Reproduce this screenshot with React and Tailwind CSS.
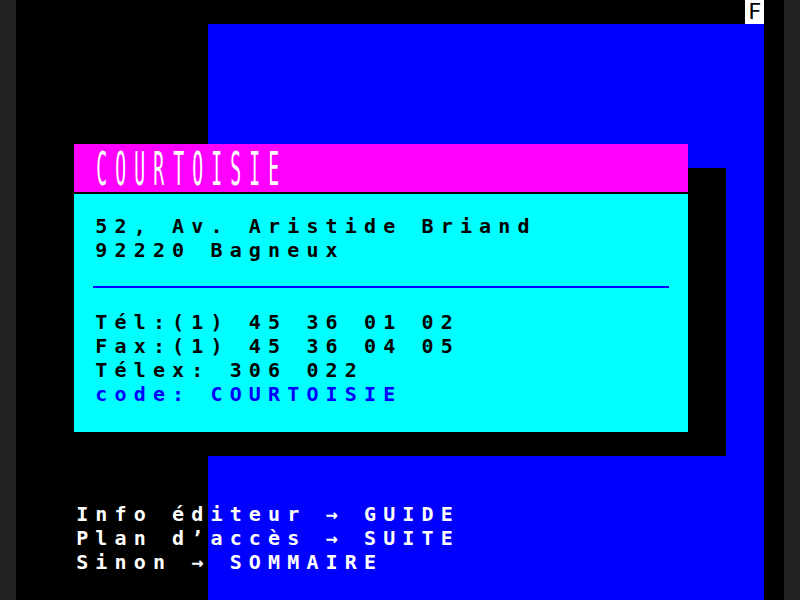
import React from 'react';

// Minitel page: 40 columns x 25 rows, each cell 19.2 x 24 px
const font = { fontFamily: '"DejaVu Sans Mono", "Liberation Mono", monospace' };

function Line({ text, className = '' }) {
  return (
    <div className={`flex h-[24px] text-[20px] leading-[20px] font-bold ${className}`}>
      {[...text].map((ch, i) => (
        <span key={i} className="inline-block w-[19.2px] shrink-0 pr-[2px] text-center whitespace-pre">
          {ch}
        </span>
      ))}
    </div>
  );
}

function Title({ text }) {
  return (
    <div className="flex h-[48px] pl-[19.2px] text-white text-[19px] leading-[48px]">
      {[...text].map((ch, i) => (
        <span key={i} className="inline-block w-[19.2px] shrink-0 pr-[2px] text-center scale-y-[2.4] scale-x-[0.95]">
          {ch}
        </span>
      ))}
    </div>
  );
}

export default function App() {
  return (
    <main className="w-[800px] h-[600px] bg-[#222222] flex justify-center" style={font}>
      <div className="w-[768px] h-[600px] bg-black grid grid-cols-[repeat(40,19.2px)] grid-rows-[repeat(25,24px)]">
        <div className="col-start-39 col-end-40 row-start-1 row-end-2 bg-white text-black flex justify-center text-[22px] leading-[24px]">
          F
        </div>

        <div className="col-start-11 col-end-40 row-start-2 row-end-26 bg-[#0000ff]" />

        <div className="col-start-6 col-end-38 row-start-8 row-end-20 bg-black" />

        <div className="col-start-4 col-end-36 row-start-7 row-end-19 flex flex-col">
          <div className="bg-[#ff00ff] h-[48px]">
            <Title text="COURTOISIE" />
          </div>
          <div className="flex-1 mt-[2px] bg-[#00ffff] text-black pl-[19.2px]">
            <div className="h-[22px]" />
            <Line text="52, Av. Aristide Briand" />
            <Line text="92220 Bagneux" />
            <div className="h-[24px] flex items-end">
              <div className="w-[576px] h-[2px] bg-[#0000ff]" />
            </div>
            <div className="h-[24px]" />
            <Line text="Tél:(1) 45 36 01 02" />
            <Line text="Fax:(1) 45 36 04 05" />
            <Line text="Télex: 306 022" />
            <Line text="code: COURTOISIE" className="text-[#0000ff]" />
          </div>
        </div>

        <div className="col-start-4 col-end-41 row-start-22 row-end-25 text-white">
          <Line text="Info éditeur → GUIDE" />
          <Line text="Plan d’accès → SUITE" />
          <Line text="Sinon → SOMMAIRE" />
        </div>
      </div>
    </main>
  );
}
